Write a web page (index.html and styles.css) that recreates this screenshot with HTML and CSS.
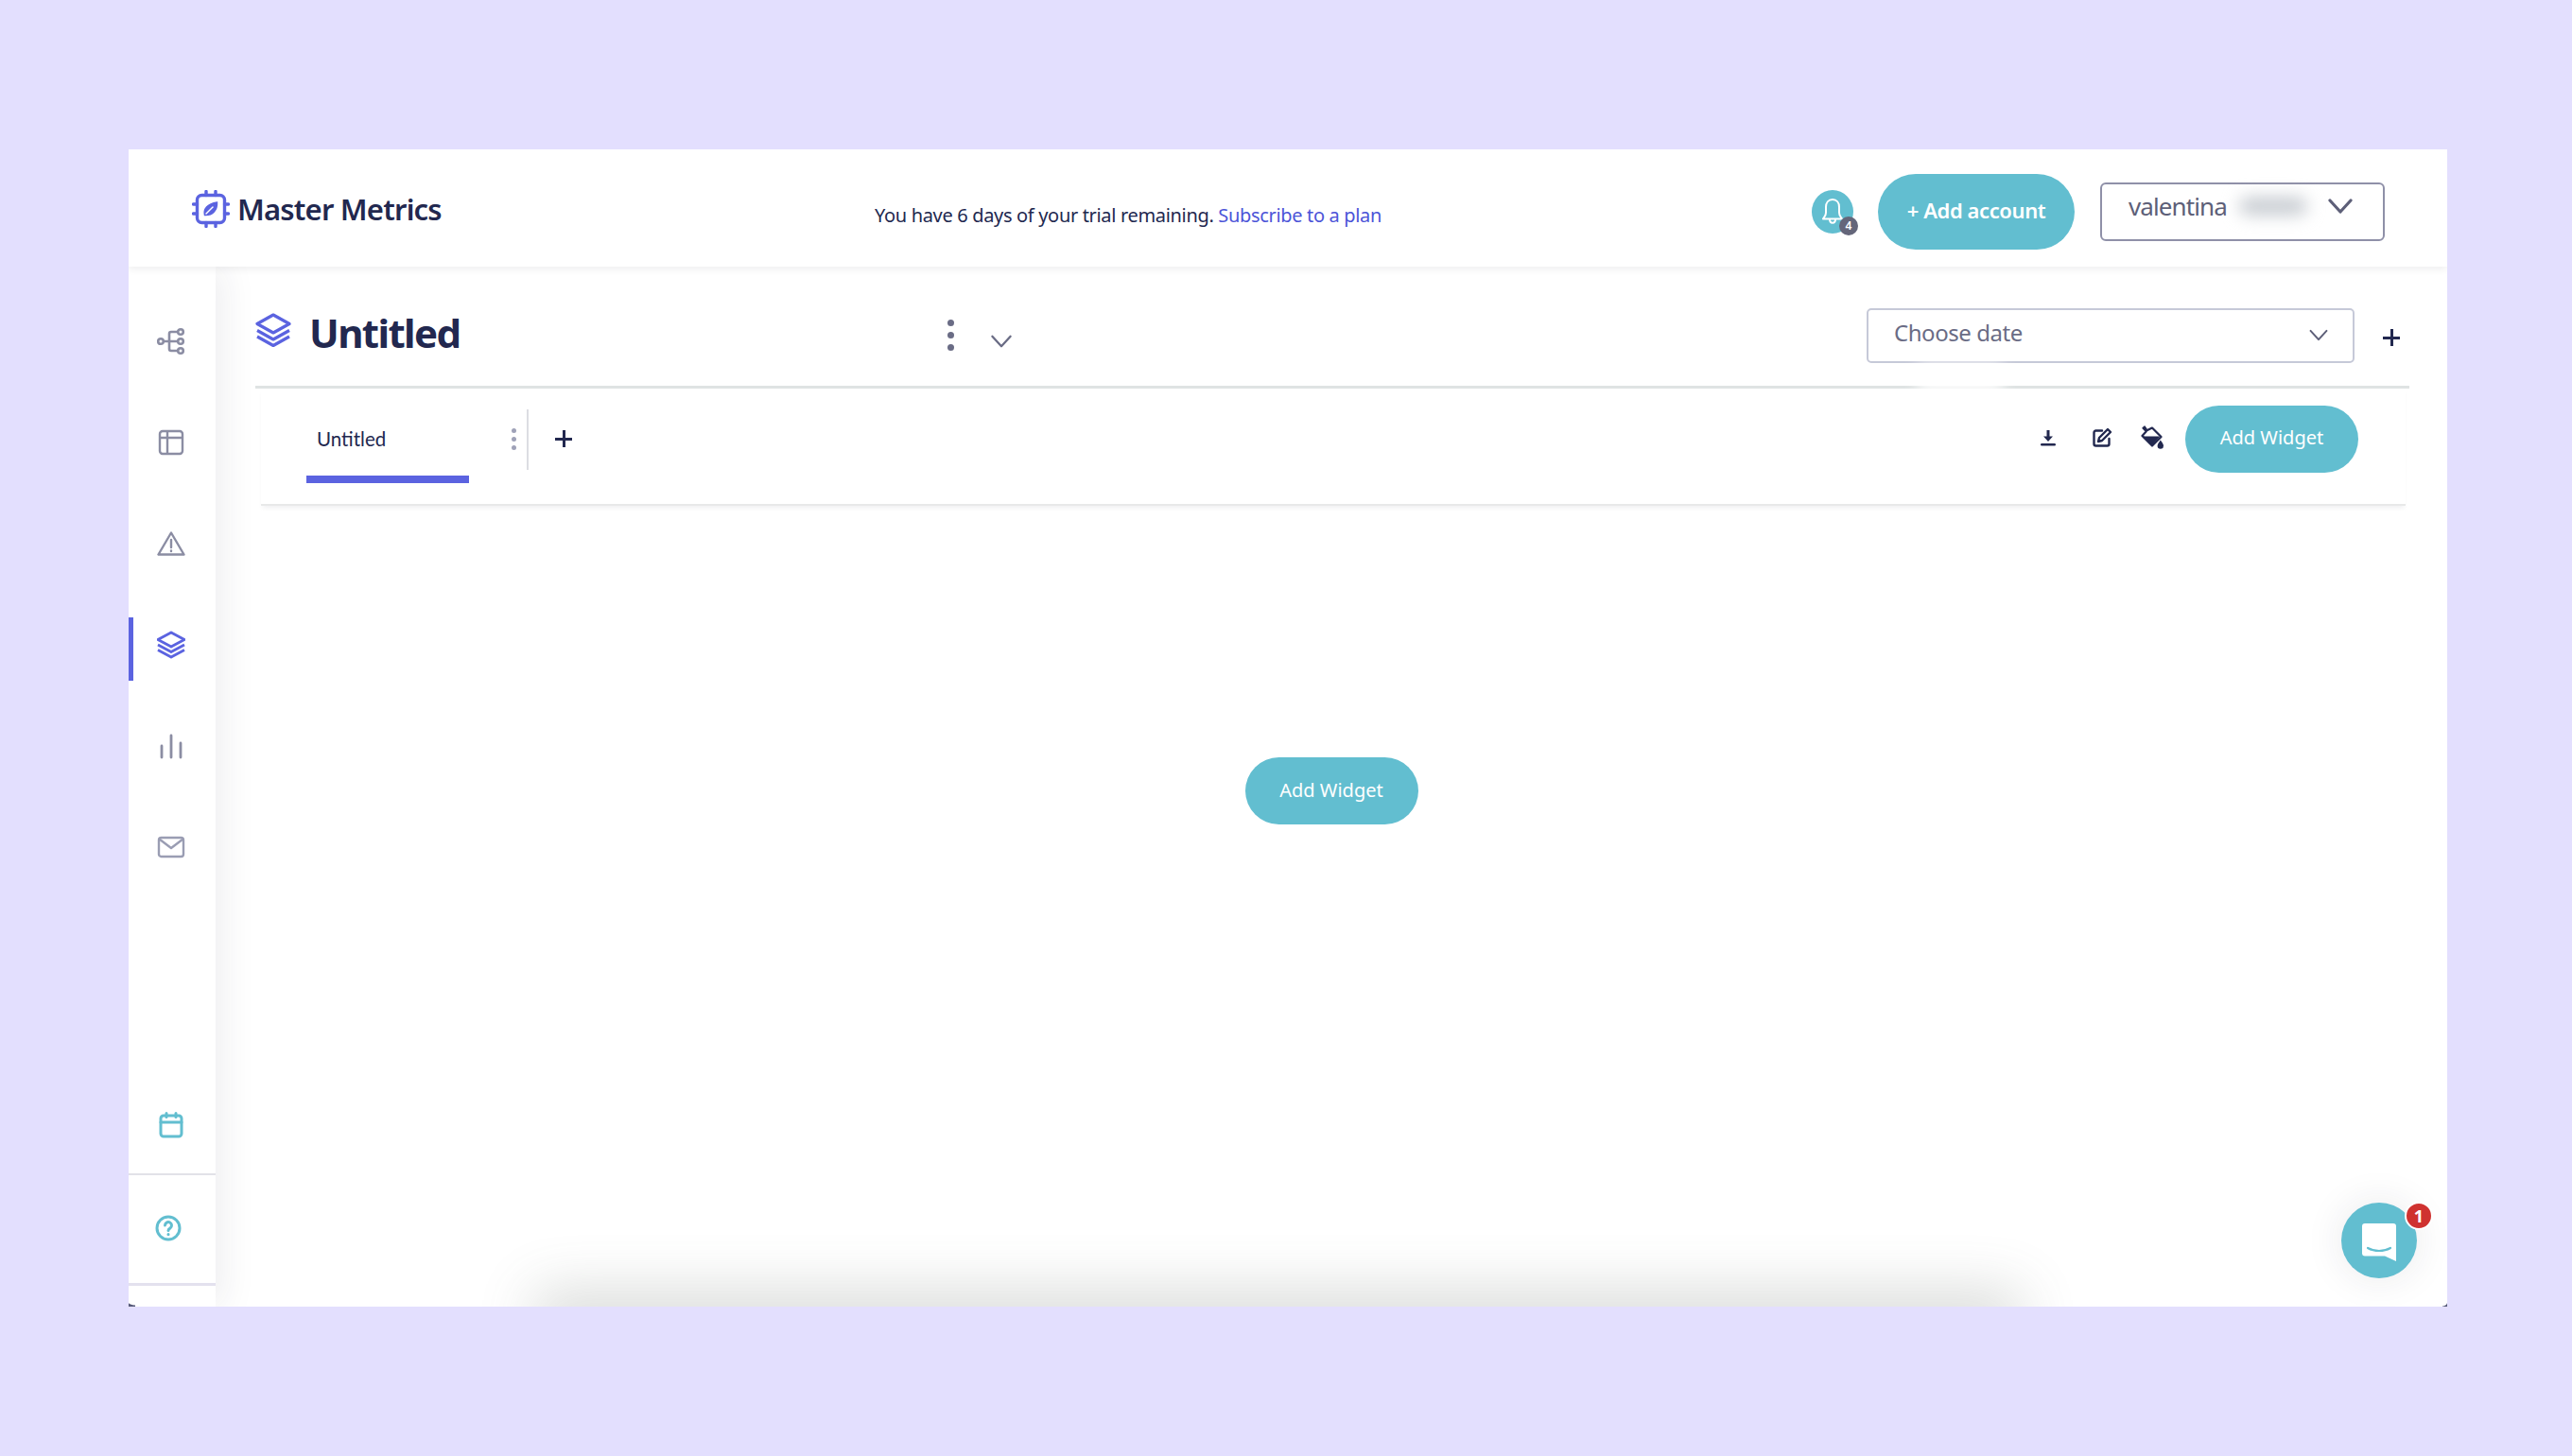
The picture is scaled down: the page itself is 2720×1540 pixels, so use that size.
FILE: index.html
```html
<!DOCTYPE html>
<html lang="en">
<head>
<meta charset="utf-8">
<title>Master Metrics</title>
<link rel="stylesheet" href="styles.css">
</head>
<body>
<div class="app">
  <header class="topbar">
    <div class="logo">
      <svg class="logo-icon" viewBox="0 0 40 40" fill="none" stroke="#5b63e0" stroke-width="3.4" stroke-linecap="round">
        <rect x="5.5" y="5.5" width="29" height="29" rx="5"/>
        <path d="M15 1.500v4M25 1.500v4M15 34.500v4M25 34.500v4M1.500 15h4M1.500 25h4M34.500 15h4M34.500 25h4"/>
        <path d="M13.500 26.500c-1.500-6 2.500-12 13-13.500 .5 8-4.500 14-13 13.500z" fill="#5b63e0" stroke-width="1.500"/>
        <path d="M15 25l7-7" stroke="#fff" stroke-width="1.500"/>
      </svg>
      <span class="logo-text">Master Metrics</span>
    </div>
    <p class="trial">You have 6 days of your trial remaining. <a class="trial-link">Subscribe to a plan</a></p>
    <div class="top-actions">
      <div class="bell">
        <svg class="bell-icon" viewBox="0 0 24 30" fill="none" stroke="#fff" stroke-width="2" stroke-linejoin="round">
          <path d="M12 2c-4.500 0-7 3.500-7 8v6c0 3-2 4.500-3 6.500h20c-1-2-3-3.500-3-6.500v-6c0-4.500-2.500-8-7-8z"/>
          <path d="M9 23c0 5 6 5 6 0"/>
        </svg>
        <span class="bell-badge">4</span>
      </div>
      <button class="btn btn-account">+ Add account</button>
      <div class="user-select">
        <span class="user-name">valentina</span>
        <span class="user-blur"></span>
        <svg class="user-chevron" viewBox="0 0 26 16" fill="none" stroke="#5d5f78" stroke-width="3.200" stroke-linecap="round" stroke-linejoin="round"><path d="M2 2l11 12L24 2"/></svg>
      </div>
    </div>
  </header>

  <div class="body">
    <nav class="sidebar">
      <ul class="nav">
        <li class="nav-item">
          <svg class="nav-icon" viewBox="0 0 30 30" fill="none" stroke="#8b8da3" stroke-width="2.600">
            <circle cx="4" cy="15" r="2.800"/><circle cx="25" cy="5" r="2.800"/><circle cx="25" cy="15" r="2.800"/><circle cx="25" cy="25" r="2.800"/>
            <path d="M7 15h15M22 5h-7a2 2 0 0 0-2 2v16a2 2 0 0 0 2 2h7"/>
          </svg>
        </li>
        <li class="nav-item">
          <svg class="nav-icon" viewBox="0 0 30 30" fill="none" stroke="#8b8da3" stroke-width="2.400">
            <rect x="3" y="3" width="24" height="24" rx="3"/><path d="M3 10h24M11 3v24"/>
          </svg>
        </li>
        <li class="nav-item">
          <svg class="nav-icon" viewBox="0 0 30 30" fill="none" stroke="#8b8da3" stroke-width="2.400" stroke-linejoin="round" stroke-linecap="round">
            <path d="M15 3.500L1.500 26.500h27z"/><path d="M15 11v8M15 22.500v.5"/>
          </svg>
        </li>
        <li class="nav-item nav-item-active">
          <svg class="nav-icon" viewBox="0 0 30 30" fill="none" stroke="#5b63e0" stroke-width="2.800" stroke-linejoin="round">
            <path d="M15 2L1 9.500 15 17l14-7.500z"/><path d="M1 15l14 7.500L29 15M1 20.500L15 28l14-7.500"/>
          </svg>
        </li>
        <li class="nav-item">
          <svg class="nav-icon" viewBox="0 0 30 30" fill="none" stroke="#8b8da3" stroke-width="2.800" stroke-linecap="round">
            <path d="M5 27V15M15 27V4M25 27V12"/>
          </svg>
        </li>
        <li class="nav-item">
          <svg class="nav-icon" viewBox="0 0 30 30" fill="none" stroke="#9a9db3" stroke-width="2.400" stroke-linejoin="round">
            <rect x="2" y="5" width="26" height="20" rx="2.500"/><path d="M2.500 6.500L15 16 27.500 6.500"/>
          </svg>
        </li>
      </ul>
      <div class="side-foot">
        <div class="foot-cell foot-calendar">
          <svg class="nav-icon" viewBox="0 0 30 30" fill="none" stroke="#62bed0" stroke-width="3" stroke-linecap="round">
            <rect x="4" y="5" width="22" height="22" rx="3"/><path d="M4 12h22M10 2.500v4M20 2.500v4"/>
          </svg>
        </div>
        <div class="foot-cell foot-help">
          <svg class="nav-icon" viewBox="0 0 30 30" fill="none" stroke="#62bed0" stroke-width="3" stroke-linecap="round">
            <circle cx="15" cy="15" r="12"/><path d="M11.500 12a3.500 3.500 0 1 1 5.500 3c-1.300 .9-2 1.400-2 2.500"/><path d="M15 21.500v.2"/>
          </svg>
        </div>
      </div>
    </nav>

    <main class="main">
      <section class="title-row">
        <svg class="title-icon" viewBox="0 0 38 36" fill="none" stroke="#5b63e0" stroke-width="3.200" stroke-linejoin="round">
          <path d="M19 2L2 11.500 19 21l17-9.500z"/><path d="M2 18.500L19 28l17-9.500M2 25L19 34.500 36 25"/>
        </svg>
        <h1 class="title">Untitled</h1>
        <span class="kebab kebab-large"><i></i><i></i><i></i></span>
        <svg class="title-chevron" viewBox="0 0 26 16" fill="none" stroke="#6a6c85" stroke-width="2.600" stroke-linecap="round" stroke-linejoin="round"><path d="M2 2l11 12L24 2"/></svg>
        <div class="date-select">
          <span class="date-text">Choose date</span>
          <svg class="date-chevron" viewBox="0 0 26 16" fill="none" stroke="#5d5f78" stroke-width="2.600" stroke-linecap="round" stroke-linejoin="round"><path d="M2 2l11 12L24 2"/></svg>
        </div>
        <span class="plus plus-date"></span>
        <span class="smudge"></span>
      </section>

      <section class="tab-row">
        <div class="tab">
          <span class="tab-label">Untitled</span>
          <span class="kebab"><i></i><i></i><i></i></span>
        </div>
        <div class="tab-add"><span class="plus"></span></div>
        <div class="tools">
          <svg class="tool tool-download" viewBox="0 0 20 20" fill="#22284f">
            <path d="M8.500 2h3v6.500H15L10 14 5 8.500h3.500z"/><rect x="2" y="16" width="16" height="2.400" rx="1.200"/>
          </svg>
          <svg class="tool tool-edit" viewBox="0 0 22 22" fill="none" stroke="#22284f" stroke-width="2.400" stroke-linecap="round" stroke-linejoin="round">
            <path d="M11 3.500H4.500a2 2 0 0 0-2 2v12a2 2 0 0 0 2 2h12a2 2 0 0 0 2-2V12"/>
            <path d="M17 2l3 3-9 9-4 1 1-4z"/>
          </svg>
          <svg class="tool tool-paint" viewBox="0 0 26 26" fill="#22284f">
            <path d="M5 1.500l2.500 3.800L13 2.500 22.500 12 13 21.500 2.500 11 6.800 6.200 3.500 2.800z" fill="none" stroke="#22284f" stroke-width="2.200" stroke-linejoin="round"/>
            <path d="M3.500 11.500h18L13 21z"/>
            <path d="M21.800 15.500c1.700 2.600 3.200 4.200 3.200 6a3.200 3.200 0 0 1-6.400 0c0-1.800 1.500-3.400 3.200-6z"/>
          </svg>
          <button class="btn btn-widget">Add Widget</button>
        </div>
      </section>

      <section class="canvas">
        <button class="btn btn-widget">Add Widget</button>
      </section>
    </main>
  </div>

  <span class="bottom-shadow"></span>
  <span class="corner corner-left"></span>
  <span class="corner corner-right"></span>
  <button class="chat">
    <svg class="chat-icon" viewBox="0 0 36 40">
      <path d="M3 0h30a3 3 0 0 1 3 3v37l-12-5.500H3a3 3 0 0 1-3-3V3a3 3 0 0 1 3-3z" fill="#fff"/>
      <path d="M6 26c7 4 17 4 24 0" fill="none" stroke="#62bed0" stroke-width="2.200" stroke-linecap="round"/>
    </svg>
    <span class="chat-badge">1</span>
  </button>
</div>
</body>
</html>
```
FILE: styles.css
```css
* { box-sizing: border-box; }
html, body { margin: 0; height: 100%; }
body {
  background: #e3dffe;
  padding: 158px 132px 158px 136px;
  font-family: "Noto Sans", "Open Sans", sans-serif;
  color: #22284f;
  overflow: hidden;
}
.app {
  position: relative;
  width: 2452px;
  height: 1224px;
  background: #fff;
  display: flex;
  flex-direction: column;
  overflow: hidden;
}
.topbar {
  position: relative;
  z-index: 3;
  height: 124px;
  flex: none;
  display: flex;
  align-items: center;
  padding: 7px 66px 0 67px;
  background: #fff;
  box-shadow: 0 2px 8px rgba(40, 40, 60, .09);
}
.logo { display: flex; align-items: center; gap: 8px; width: 265px; margin-bottom: 5px; }
.logo-icon { width: 40px; height: 40px; flex: none; }
.logo-text { font-size: 31px; font-weight: 600; color: #22284f; white-space: nowrap; letter-spacing: -.8px; }
.trial { margin: 7px 0 0 457px; font-size: 20px; color: #22284f; white-space: nowrap; letter-spacing: -.33px; }
.trial-link { color: #4c54d8; }
.top-actions { margin-left: auto; display: flex; align-items: center; }
.bell {
  position: relative;
  width: 44px;
  height: 46px;
  border-radius: 50%;
  background: #62bed0;
  display: flex;
  align-items: center;
  justify-content: center;
}
.bell-icon { width: 24px; height: 32px; }
.bell-badge {
  position: absolute;
  right: -5px;
  bottom: -2px;
  width: 20px;
  height: 20px;
  border-radius: 50%;
  background: #64667a;
  color: #fff;
  font-size: 12px;
  font-weight: 600;
  text-align: center;
  line-height: 20px;
}
.btn {
  border: 0;
  background: #62bed0;
  color: #fff;
  font-family: "Noto Sans", sans-serif;
  cursor: pointer;
  padding: 0 0 3px;
}
.btn-account {
  margin-left: 26px;
  width: 208px;
  height: 80px;
  border-radius: 40px;
  font-size: 22px;
  font-weight: 600;
  letter-spacing: -.4px;
}
.user-select {
  position: relative;
  margin-left: 27px;
  width: 301px;
  height: 62px;
  border: 2px solid #8f90a8;
  border-radius: 6px;
  display: flex;
  align-items: center;
  padding: 0 28px 11px;
}
.user-name { font-size: 26px; color: #5d5f78; letter-spacing: -.9px; }
.user-blur {
  position: absolute;
  left: 145px;
  top: 14px;
  width: 72px;
  height: 18px;
  border-radius: 9px;
  background: #c3c8ce;
  filter: blur(9px);
}
.user-chevron { width: 26px; height: 16px; margin-left: auto; margin-right: 4px; }
.body { flex: 1; display: flex; min-height: 0; }
.sidebar {
  position: relative;
  z-index: 2;
  width: 92px;
  flex: none;
  display: flex;
  flex-direction: column;
  background: #fff;
  box-shadow: 8px 0 36px rgba(40, 40, 60, .08);
}
.nav { list-style: none; margin: 0; padding: 25px 2px 0 0; }
.nav-item {
  position: relative;
  height: 107px;
  display: flex;
  align-items: center;
  justify-content: center;
}
.nav-item-active::before {
  content: "";
  position: absolute;
  left: 0;
  top: 25px;
  width: 5px;
  height: 67px;
  background: #5b63e0;
}
.nav-icon { width: 30px; height: 30px; }
.side-foot { margin-top: auto; padding-bottom: 22px; }
.foot-cell {
  display: flex;
  align-items: center;
  justify-content: center;
}
.foot-calendar { height: 113px; padding: 8px 2px 0 0; border-bottom: 2px solid #e2e2e8; }
.foot-help { height: 117px; padding: 0 8px 2px 0; border-bottom: 3px solid #e3e1ee; }
.main { flex: 1; min-width: 0; display: flex; flex-direction: column; background: #fff; }
.title-row {
  position: relative;
  height: 129px;
  flex: none;
  margin: 0 40px 0 42px;
  display: flex;
  align-items: center;
  border-bottom: 3px solid #dfe3e3;
}
.title-icon { width: 38px; height: 36px; margin-top: 8px; flex: none; }
.title { margin: 13px 0 0 19px; font-size: 42px; font-weight: 700; line-height: 1; width: 675px; letter-spacing: -1.6px; }
.kebab { display: flex; flex-direction: column; gap: 4px; }
.kebab i { width: 5px; height: 5px; border-radius: 50%; background: #9fa2b8; }
.kebab-large { gap: 6px; margin-top: 18px; }
.kebab-large i { width: 7px; height: 7px; background: #6a6c85; }
.title-chevron { width: 24px; height: 14px; margin: 31px 0 0 38px; }
.date-select {
  margin: 19px 0 0 auto;
  width: 516px;
  height: 58px;
  border: 2px solid #c6c9d8;
  border-radius: 5px;
  display: flex;
  align-items: center;
  padding: 0 26px 6px 27px;
  background: #fff;
}
.date-text { font-size: 24px; color: #6a6c85; letter-spacing: -.45px; }
.date-chevron { width: 20px; height: 13px; margin: 6px 0 0 auto; }
.plus { position: relative; display: block; width: 18px; height: 18px; }
.plus::before, .plus::after { content: ""; position: absolute; background: #22284f; }
.plus::before { left: 0; right: 0; top: 8px; height: 3px; }
.plus::after { top: 0; bottom: 0; left: 8px; width: 3px; }
.plus-date { margin: 23px 10px 0 30px; }
.smudge {
  position: absolute;
  right: 430px;
  top: 103px;
  width: 90px;
  height: 30px;
  background: #fff;
  filter: blur(8px);
}
.tab-row {
  position: relative;
  height: 124px;
  flex: none;
  margin: 0 44px 0 48px;
  display: flex;
  align-items: center;
  border-bottom: 2px solid #e8e9e9;
  box-shadow: 0 4px 5px -2px rgba(40, 40, 60, .08);
}
.tab {
  position: relative;
  width: 235px;
  height: 100%;
  margin-left: 48px;
  display: flex;
  align-items: center;
  justify-content: space-between;
  padding: 0 13px 16px 11px;
  flex: none;
}
.tab::before {
  content: "";
  position: absolute;
  left: 0;
  top: 92px;
  width: 172px;
  height: 8px;
  background: #5b63e0;
}
.tab::after {
  content: "";
  position: absolute;
  right: 0;
  top: 22px;
  width: 2px;
  height: 64px;
  background: #dcdde2;
}
.tab-label { font-family: "Lato", sans-serif; font-size: 20.500px; color: #22284f; }
.tab-add { margin-left: 28px; padding-bottom: 16px; }
.tools { margin-left: auto; display: flex; align-items: center; margin-right: 50px; padding-bottom: 16px; }
.tool { flex: none; margin-bottom: 3px; }
.tool-download { width: 20px; height: 20px; }
.tool-edit { width: 22px; height: 22px; margin-left: 36px; }
.tool-paint { width: 26px; height: 26px; margin-left: 29px; }
.btn-widget {
  width: 183px;
  height: 71px;
  border-radius: 36px;
  font-size: 20px;
  font-weight: 400;
  flex: none;
}
.tools .btn-widget { margin-left: 22px; }
.canvas { flex: 1; display: flex; justify-content: center; padding-top: 266px; }
.bottom-shadow {
  position: absolute;
  z-index: 1;
  left: 440px;
  width: 1550px;
  bottom: -40px;
  height: 40px;
  box-shadow: 0 -6px 60px 10px rgba(90, 100, 90, .24);
}
.corner { position: absolute; z-index: 5; bottom: 0; }
.corner-left {
  left: 0;
  width: 7px;
  height: 14px;
  background: radial-gradient(circle at 100% 0, transparent 0 12px, #565a78 13px);
}
.corner-right {
  right: 0;
  width: 5px;
  height: 6px;
  background: radial-gradient(circle at 0 0, transparent 0 5px, #565a78 6px);
}
.chat {
  position: absolute;
  z-index: 4;
  left: 2340px;
  top: 1114px;
  width: 80px;
  height: 80px;
  border-radius: 50%;
  border: 0;
  padding: 0;
  background: #62bed0;
  box-shadow: 0 0 40px rgba(40, 40, 60, .10);
  display: flex;
  align-items: center;
  justify-content: center;
}
.chat-icon { width: 36px; height: 40px; margin-top: 4px; }
.chat-badge {
  position: absolute;
  left: 67px;
  top: -1px;
  width: 30px;
  height: 30px;
  border-radius: 50%;
  border: 2px solid #fff;
  background: #cf3230;
  color: #fff;
  font: 700 18px/26px "Noto Sans", sans-serif;
  text-align: center;
}
```
